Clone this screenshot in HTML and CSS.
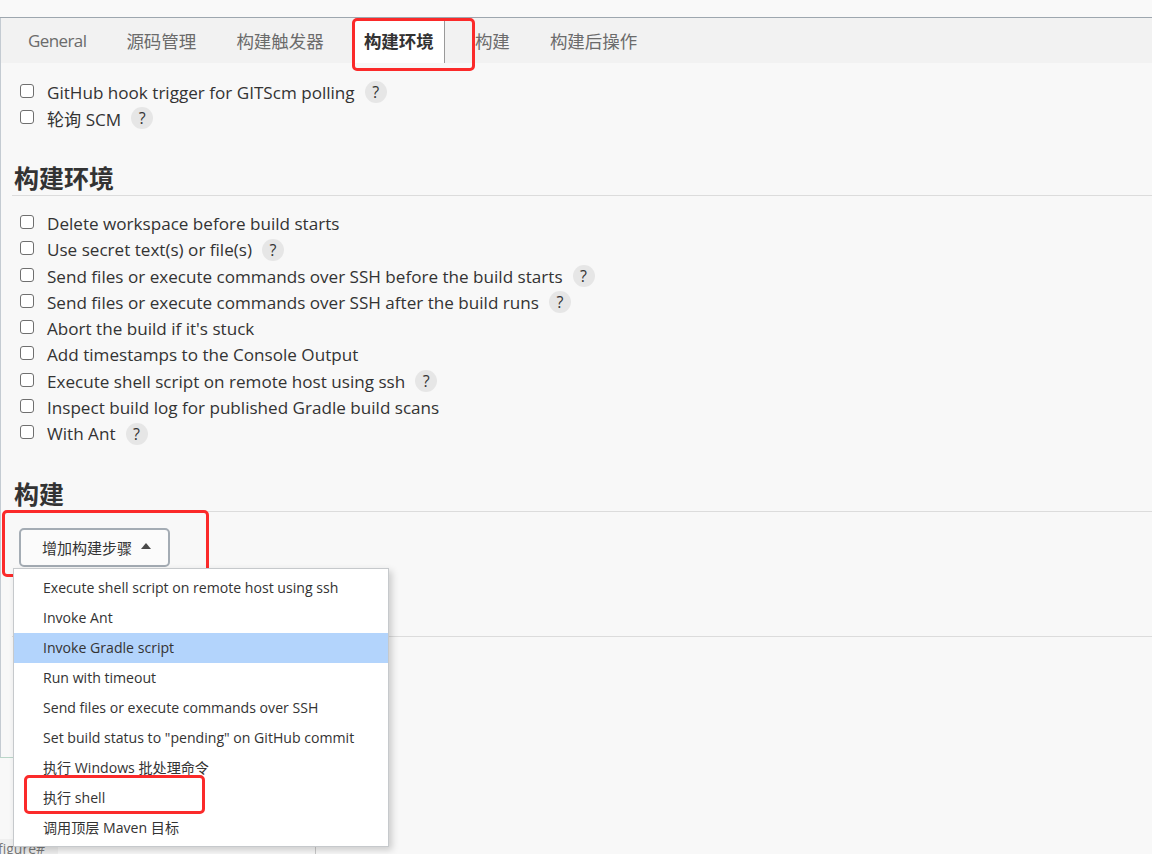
FILE: index.html
```html
<!DOCTYPE html>
<html lang="zh-CN">
<head>
<meta charset="utf-8">
<title>Configure</title>
<link rel="stylesheet" href="styles.css">
</head>
<body>
<div class="top-strip"></div>
<div class="page">
  <nav class="tabbar">
    <div class="tab tab-latin">General</div>
    <div class="tab">源码管理</div>
    <div class="tab">构建触发器</div>
    <div class="tab active">构建环境</div>
    <div class="tab">构建</div>
    <div class="tab">构建后操作</div>
    <div class="mark mark-tab"></div>
  </nav>

  <main class="content">
    <div class="rows">
      <label class="row"><span class="cb"></span><span class="label">GitHub hook trigger for GITScm polling</span><span class="help">?</span></label>
      <label class="row"><span class="cb"></span><span class="label">轮询 SCM</span><span class="help">?</span></label>
    </div>

    <h2 class="section-title">构建环境</h2>
    <div class="rows">
      <label class="row"><span class="cb"></span><span class="label">Delete workspace before build starts</span></label>
      <label class="row"><span class="cb"></span><span class="label">Use secret text(s) or file(s)</span><span class="help">?</span></label>
      <label class="row"><span class="cb"></span><span class="label">Send files or execute commands over SSH before the build starts</span><span class="help">?</span></label>
      <label class="row"><span class="cb"></span><span class="label">Send files or execute commands over SSH after the build runs</span><span class="help">?</span></label>
      <label class="row"><span class="cb"></span><span class="label">Abort the build if it's stuck</span></label>
      <label class="row"><span class="cb"></span><span class="label">Add timestamps to the Console Output</span></label>
      <label class="row"><span class="cb"></span><span class="label">Execute shell script on remote host using ssh</span><span class="help">?</span></label>
      <label class="row"><span class="cb"></span><span class="label">Inspect build log for published Gradle build scans</span></label>
      <label class="row"><span class="cb"></span><span class="label">With Ant</span><span class="help">?</span></label>
    </div>

    <h2 class="section-title section-title-build">构建</h2>
    <div class="build-section">
      <div class="btn-wrap">
        <button class="add-btn">增加构建步骤 <span class="caret"></span></button>
        <div class="mark mark-btn"></div>
        <ul class="dropdown">
          <li>Execute shell script on remote host using ssh</li>
          <li>Invoke Ant</li>
          <li class="hl">Invoke Gradle script</li>
          <li>Run with timeout</li>
          <li>Send files or execute commands over SSH</li>
          <li>Set build status to "pending" on GitHub commit</li>
          <li>执行 Windows 批处理命令</li>
          <li class="shell">执行 shell<span class="mark mark-shell"></span></li>
          <li>调用顶层 Maven 目标</li>
        </ul>
      </div>
    </div>
  </main>
</div>
<div class="left-tick"></div>
<div class="status-bubble">figure#</div>
<div class="bottom-divider"></div>
</body>
</html>
```

FILE: styles.css
```css
* { box-sizing: border-box; }

html, body {
  margin: 0;
  padding: 0;
  background: #f8f8f8;
  height: 100%;
  overflow: hidden;
}

body {
  font-family: "Open Sans", "Noto Sans CJK SC", sans-serif;
  color: #333;
  position: relative;
}

.top-strip {
  height: 18px;
  background: #f9f9f9;
  border-bottom: 1px solid #9ea7af;
}

.page {
  border-left: 1px solid #c4cbd2;
  height: 739px;
}

.tabbar {
  position: relative;
  display: flex;
  align-items: stretch;
  height: 45px;
  background: #f2f2f2;
  padding-left: 17px;
  gap: 20px;
}

.tab {
  display: flex;
  align-items: center;
  padding: 0 10px 1px;
  font-size: 17.5px;
  color: #6b6b6b;
  white-space: nowrap;
}

.tab-latin {
  font-size: 17px;
  letter-spacing: -0.6px;
}

.tab.active {
  background: #fff;
  color: #333;
  font-weight: bold;
  border-right: 1px solid #9a9a9a;
}

.mark {
  position: absolute;
  border: 3px solid #fb2a2a;
  border-radius: 5px;
  pointer-events: none;
}

.mark-tab {
  left: 351px;
  top: 0;
  width: 123px;
  height: 53px;
}

.content {
  padding-top: 16px;
}

.rows {
  display: flex;
  flex-direction: column;
}

.row {
  display: flex;
  align-items: center;
  height: 26.25px;
  padding-left: 19px;
  font-size: 17.1px;
}

.cb {
  width: 14px;
  height: 14px;
  border: 1px solid #6f6f6f;
  border-radius: 3px;
  background: #fff;
  margin-right: 13px;
  margin-top: -3px;
  flex: none;
}

.label {
  white-space: nowrap;
}

.help {
  display: inline-flex;
  align-items: center;
  justify-content: center;
  width: 22px;
  height: 22px;
  border-radius: 50%;
  background: #e6e6e6;
  margin-left: 10px;
  font-size: 16px;
  color: #333;
}

.section-title {
  margin: 29px 0 15px 11px;
  font-size: 25px;
  line-height: 34px;
  font-weight: bold;
  color: #333;
  border-bottom: 1px solid #dcdcdc;
  padding-left: 2px;
}

.section-title-build {
  margin-top: 30px;
  margin-bottom: 16px;
}

.build-section {
  margin-left: 11px;
  height: 109px;
  border-bottom: 1px solid #dcdcdc;
}

.btn-wrap {
  position: relative;
  display: inline-block;
  margin-left: 7px;
}

.add-btn {
  display: flex;
  align-items: center;
  gap: 6px;
  width: 151px;
  height: 39px;
  padding: 0 0 0 21px;
  border: 2px solid #a4acb4;
  border-radius: 5px;
  background: #fbfbfb;
  font-family: "Noto Sans CJK SC", sans-serif;
  font-size: 15px;
  color: #333;
}

.caret {
  width: 0;
  height: 0;
  border-left: 5px solid transparent;
  border-right: 5px solid transparent;
  border-bottom: 6px solid #4a4a4a;
  margin-left: 3px;
  margin-top: -2px;
}

.mark-btn {
  left: -17px;
  top: -18px;
  width: 207px;
  height: 67px;
}

.dropdown {
  position: absolute;
  left: -6px;
  top: 40px;
  width: 376px;
  margin: 0;
  padding: 4px 0 3px;
  list-style: none;
  background: #fff;
  border: 1px solid #c6c9cc;
  box-shadow: 3px 3px 7px rgba(0, 0, 0, 0.18);
  z-index: 5;
}

.dropdown li {
  position: relative;
  height: 30px;
  line-height: 30px;
  padding-left: 29px;
  font-size: 14.1px;
  color: #333;
  white-space: nowrap;
}

.dropdown li.hl {
  background: #b3d4fc;
}

.mark-shell {
  left: 10px;
  top: -8px;
  width: 181px;
  height: 39px;
}

.left-tick {
  position: absolute;
  left: 0;
  top: 757px;
  width: 14px;
  height: 1px;
  background: #b9d6c8;
}

.status-bubble {
  position: absolute;
  left: 0;
  top: 839px;
  width: 58px;
  height: 15px;
  overflow: hidden;
  background: #efefef;
  border-top-right-radius: 4px;
  font-size: 14px;
  line-height: 20px;
  color: #777;
  text-indent: -2px;
}

.bottom-divider {
  position: absolute;
  left: 315px;
  top: 838px;
  width: 1px;
  height: 16px;
  background: #c8c8c8;
}
```
